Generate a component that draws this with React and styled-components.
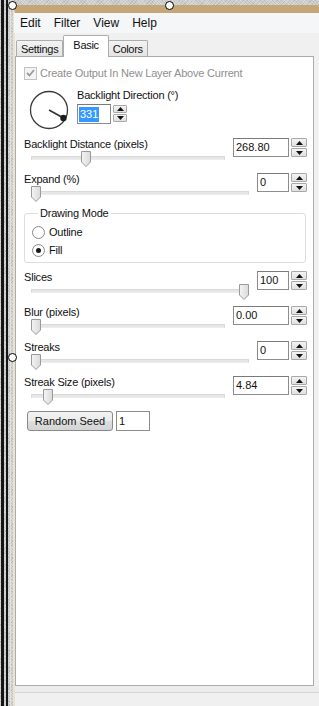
import React from "react";
import styled, { createGlobalStyle } from "styled-components";

const GlobalStyle = createGlobalStyle`
  html, body {
    margin: 0;
    padding: 0;
    background: #c8c8c8;
  }
  body {
    width: 319px;
    height: 706px;
    overflow: hidden;
    font-family: "Liberation Sans", Arial, sans-serif;
    font-size: 11px;
    letter-spacing: -0.2px;
    color: #111;
  }
  * {
    box-sizing: border-box;
  }
`;

const Desktop = styled.div`
  position: relative;
  display: flex;
  width: 319px;
  height: 706px;
  background-color: #c9c9c9;
  background-image:
    repeating-linear-gradient(45deg, rgba(255, 255, 255, 0.3) 0 1px, transparent 1px 2px),
    repeating-linear-gradient(-45deg, rgba(0, 0, 0, 0.08) 0 1px, transparent 1px 3px);
`;

const Rail = styled.div`
  flex: none;
  width: 13px;
  background: linear-gradient(
    to right,
    transparent 0 1px,
    #151515 1px 4px,
    transparent 4px 6px,
    #151515 6px 8px,
    transparent 8px 10px,
    #e2e2e2 10px 11px,
    transparent 11px
  );
`;

const Main = styled.div`
  flex: 1;
  min-width: 0;
  display: flex;
  flex-direction: column;
  padding-top: 5px;
`;

const Window = styled.div`
  flex: 1;
  display: flex;
  flex-direction: column;
  background: #f0f0f0;
  border-top: 8px solid #c5a677;
  border-left: 2px solid #e9e3cf;
`;

const Handle = styled.div`
  position: absolute;
  width: 9px;
  height: 9px;
  border-radius: 50%;
  background: #fff;
  border: 1.5px solid #000;
  z-index: 5;
`;

const MenuBar = styled.div`
  display: flex;
  align-items: center;
  height: 20px;
  margin-left: -1px;
  background: #f5f6f7;
  font-size: 12px;
  letter-spacing: 0;
`;

const MenuItem = styled.div`
  padding: 0 6px;
  margin-right: 1px;
  line-height: 20px;
`;

const TabStrip = styled.div`
  position: relative;
  z-index: 1;
  display: flex;
  align-items: flex-end;
  height: 23px;
  padding-left: 1px;
`;

const Tab = styled.div`
  position: relative;
  z-index: ${(p) => (p.$active ? 2 : 0)};
  display: flex;
  align-items: center;
  justify-content: center;
  height: ${(p) => (p.$active ? 22 : 16)}px;
  margin: 0 ${(p) => (p.$active ? -1 : 0)}px ${(p) => (p.$active ? -1 : 0)}px 0;
  padding: ${(p) => (p.$active ? "0 9px 3px" : "0 4px 0")};
  border: 1px solid #acacac;
  border-bottom: none;
  border-radius: 2px 2px 0 0;
  background: ${(p) => (p.$active ? "#fff" : "linear-gradient(#f3f3f3, #e4e4e4)")};
  letter-spacing: -0.3px;
`;

const Panel = styled.div`
  flex: 1;
  display: flex;
  flex-direction: column;
  margin-right: 5px;
  padding: 0 6px 0 8px;
  background: #fff;
  border: 1px solid #acacac;
`;

const BottomBand = styled.div`
  flex: none;
  height: 6px;
  background: #ececec;
`;

const StatusBar = styled.div`
  flex: none;
  height: 14px;
  border-top: 1px solid #d4d4d4;
  background: #f0f0f0;
`;

const CheckRow = styled.div`
  display: flex;
  align-items: center;
  height: 16px;
  margin-top: 8px;
  color: #8f8f8f;
  gap: 3px;
`;

const CheckBox = styled.div`
  width: 13px;
  height: 13px;
  border: 1px solid #c2c2c2;
  background: #f4f4f4;
  display: flex;
  align-items: center;
  justify-content: center;
`;

const DialRow = styled.div`
  display: flex;
  align-items: flex-start;
  height: 40px;
  margin-top: 9px;
  padding-left: 5px;
  gap: 8px;
`;

const DialColumn = styled.div`
  display: flex;
  flex-direction: column;
  gap: 2px;
`;

const Line = styled.div`
  line-height: 14px;
  white-space: nowrap;
  margin-top: ${(p) => p.$top || 0}px;
`;

const FieldRow = styled.div`
  display: grid;
  grid-template-columns: 1fr auto;
  grid-template-rows: 14px 16px;
  column-gap: 8px;
  height: 35px;
  margin-top: ${(p) => p.$gap || 0}px;
`;

const FieldLabel = styled.div`
  grid-column: 1;
  grid-row: 1;
  line-height: 14px;
  white-space: nowrap;
`;

const SpinCell = styled.div`
  grid-column: 2;
  grid-row: 1 / span 2;
  align-self: start;
  margin-top: 1px;
`;

const SliderBox = styled.div`
  grid-column: 1;
  grid-row: 2;
  position: relative;
`;

const Track = styled.div`
  margin: 5px 0 0 7px;
  height: 4px;
  border: 1px solid #d9d9d9;
  border-bottom-color: #ececec;
  background: #e6e6e6;
`;

const Thumb = styled.svg`
  position: absolute;
  top: 0;
`;

const SpinWrap = styled.div`
  display: flex;
  align-items: flex-start;
  gap: 2px;
`;

const SpinInput = styled.div`
  width: ${(p) => p.$width}px;
  height: ${(p) => (p.$small ? 20 : 19)}px;
  border: 1px solid #8c8c8c;
  border-top-color: #7a7a7a;
  background: #fff;
  padding: ${(p) => (p.$small ? "1px 1px" : "0 2px")};
  line-height: 17px;
  white-space: nowrap;
  letter-spacing: 0;
`;

const Selected = styled.span`
  display: inline-block;
  background: #3399ff;
  color: #fff;
  line-height: 15px;
  padding: 0 1px;
`;

const SpinButtons = styled.div`
  display: flex;
  flex-direction: column;
  gap: 1px;
  margin-top: ${(p) => (p.$small ? 1 : 0)}px;
`;

const SpinButton = styled.div`
  width: ${(p) => (p.$small ? 14 : 16)}px;
  height: ${(p) => (p.$small ? 8 : 9)}px;
  border: 1px solid #a9a9a9;
  border-radius: 1px;
  background: linear-gradient(#f4f4f4, #e0e0e0);
  display: flex;
  align-items: center;
  justify-content: center;
`;

const GroupBox = styled.fieldset`
  margin: -1px 1px 0 0;
  padding: 3px 6px 3px 7px;
  border: 1px solid #dcdcdc;
  border-radius: 3px;
`;

const Legend = styled.legend`
  margin-left: 6px;
  padding: 0 2px;
  line-height: 14px;
`;

const RadioRow = styled.label`
  display: flex;
  align-items: center;
  gap: 4px;
  height: 18px;
`;

const Radio = styled.span`
  width: 13px;
  height: 13px;
  border-radius: 50%;
  border: 1px solid #8a8a8a;
  background: radial-gradient(circle, #fff 0 55%, #eaeaea 100%);
  display: flex;
  align-items: center;
  justify-content: center;
  &::after {
    content: "";
    width: 5px;
    height: 5px;
    border-radius: 50%;
    background: ${(p) => (p.$checked ? "#1a1a1a" : "transparent")};
  }
`;

const SeedRow = styled.div`
  display: flex;
  align-items: center;
  gap: 3px;
  margin-top: 1px;
  padding-left: 3px;
`;

const PushButton = styled.button`
  width: 86px;
  height: 20px;
  padding: 0;
  border: 1px solid #8a8a8a;
  border-radius: 3px;
  background: linear-gradient(#f2f2f2 0%, #ebebeb 50%, #dedede 51%, #d4d4d4 100%);
  font: inherit;
  color: #111;
`;

const SeedInput = styled.div`
  width: 34px;
  height: 20px;
  border: 1px solid #8c8c8c;
  background: #fff;
  padding: 0 2px;
  line-height: 18px;
  letter-spacing: 0;
`;

const Arrow = ({ up }) => (
  <svg width="7" height="4" viewBox="0 0 7 4">
    <polygon points={up ? "0,4 7,4 3.5,0" : "0,0 7,0 3.5,4"} fill="#111" />
  </svg>
);

const Spinner = ({ value, width, selected, small }) => (
  <SpinWrap>
    <SpinInput $width={width} $small={small}>
      {selected ? <Selected>{value}</Selected> : value}
    </SpinInput>
    <SpinButtons $small={small}>
      <SpinButton $small={small}>
        <Arrow up />
      </SpinButton>
      <SpinButton $small={small}>
        <Arrow />
      </SpinButton>
    </SpinButtons>
  </SpinWrap>
);

const Dial = ({ angle }) => {
  const rad = (angle * Math.PI) / 180;
  const kx = 20 + 16.5 * Math.cos(rad);
  const ky = 20 - 16.5 * Math.sin(rad);
  return (
    <svg width="40" height="40" viewBox="0 0 40 40">
      <circle cx="20" cy="20" r="18.5" fill="none" stroke="#3a3a3a" strokeWidth="1.3" />
      <line x1="20" y1="20" x2={kx} y2={ky} stroke="#333" strokeWidth="1.6" />
      <circle cx={kx} cy={ky} r="3.2" fill="#1c1c1c" />
    </svg>
  );
};

const SliderField = ({ label, value, width, pos, gap }) => (
  <FieldRow $gap={gap}>
    <FieldLabel>{label}</FieldLabel>
    <SliderBox>
      <Track />
      <Thumb
        width="10"
        height="16"
        viewBox="0 0 10 16"
        style={{ left: `calc(7px + (100% - 17px) * ${pos})` }}
      >
        <defs>
          <linearGradient id="thumbFill" x1="0" y1="0" x2="1" y2="0">
            <stop offset="0" stopColor="#f4f4f4" />
            <stop offset="1" stopColor="#dadada" />
          </linearGradient>
        </defs>
        <path d="M0.5 0.5 H9.5 V11 L5 15.5 L0.5 11 Z" fill="url(#thumbFill)" stroke="#9a9a9a" />
      </Thumb>
    </SliderBox>
    <SpinCell>
      <Spinner value={value} width={width} />
    </SpinCell>
  </FieldRow>
);

export default function App() {
  return (
    <>
      <GlobalStyle />
      <Desktop>
        <Handle style={{ left: 8, top: 1 }} />
        <Handle style={{ left: 165, top: 1 }} />
        <Handle style={{ left: 8, top: 353 }} />
        <Rail />
        <Main>
          <Window>
            <MenuBar>
              <MenuItem>Edit</MenuItem>
              <MenuItem>Filter</MenuItem>
              <MenuItem>View</MenuItem>
              <MenuItem>Help</MenuItem>
            </MenuBar>
            <TabStrip>
              <Tab>Settings</Tab>
              <Tab $active>Basic</Tab>
              <Tab>Colors</Tab>
            </TabStrip>
            <Panel>
              <CheckRow>
                <CheckBox>
                  <svg width="9" height="8" viewBox="0 0 9 8">
                    <path d="M1 4 L3.5 6.5 L8 1" fill="none" stroke="#9b9b9b" strokeWidth="1.8" />
                  </svg>
                </CheckBox>
                Create Output In New Layer Above Current
              </CheckRow>
              <DialRow>
                <Dial angle={331} />
                <DialColumn>
                  <Line $top={-2}>Backlight Direction (°)</Line>
                  <Spinner value="331" width={34} selected small />
                </DialColumn>
              </DialRow>
              <SliderField label="Backlight Distance (pixels)" value="268.80" width={56} pos={0.27} gap={7} />
              <SliderField label="Expand (%)" value="0" width={32} pos={0} />
              <GroupBox>
                <Legend>Drawing Mode</Legend>
                <RadioRow>
                  <Radio />
                  Outline
                </RadioRow>
                <RadioRow>
                  <Radio $checked />
                  Fill
                </RadioRow>
              </GroupBox>
              <SliderField label="Slices" value="100" width={32} pos={1} gap={7} />
              <SliderField label="Blur (pixels)" value="0.00" width={56} pos={0} />
              <SliderField label="Streaks" value="0" width={32} pos={0} />
              <SliderField label="Streak Size (pixels)" value="4.84" width={56} pos={0.065} />
              <SeedRow>
                <PushButton>Random Seed</PushButton>
                <SeedInput>1</SeedInput>
              </SeedRow>
            </Panel>
            <BottomBand />
            <StatusBar />
          </Window>
        </Main>
      </Desktop>
    </>
  );
}
